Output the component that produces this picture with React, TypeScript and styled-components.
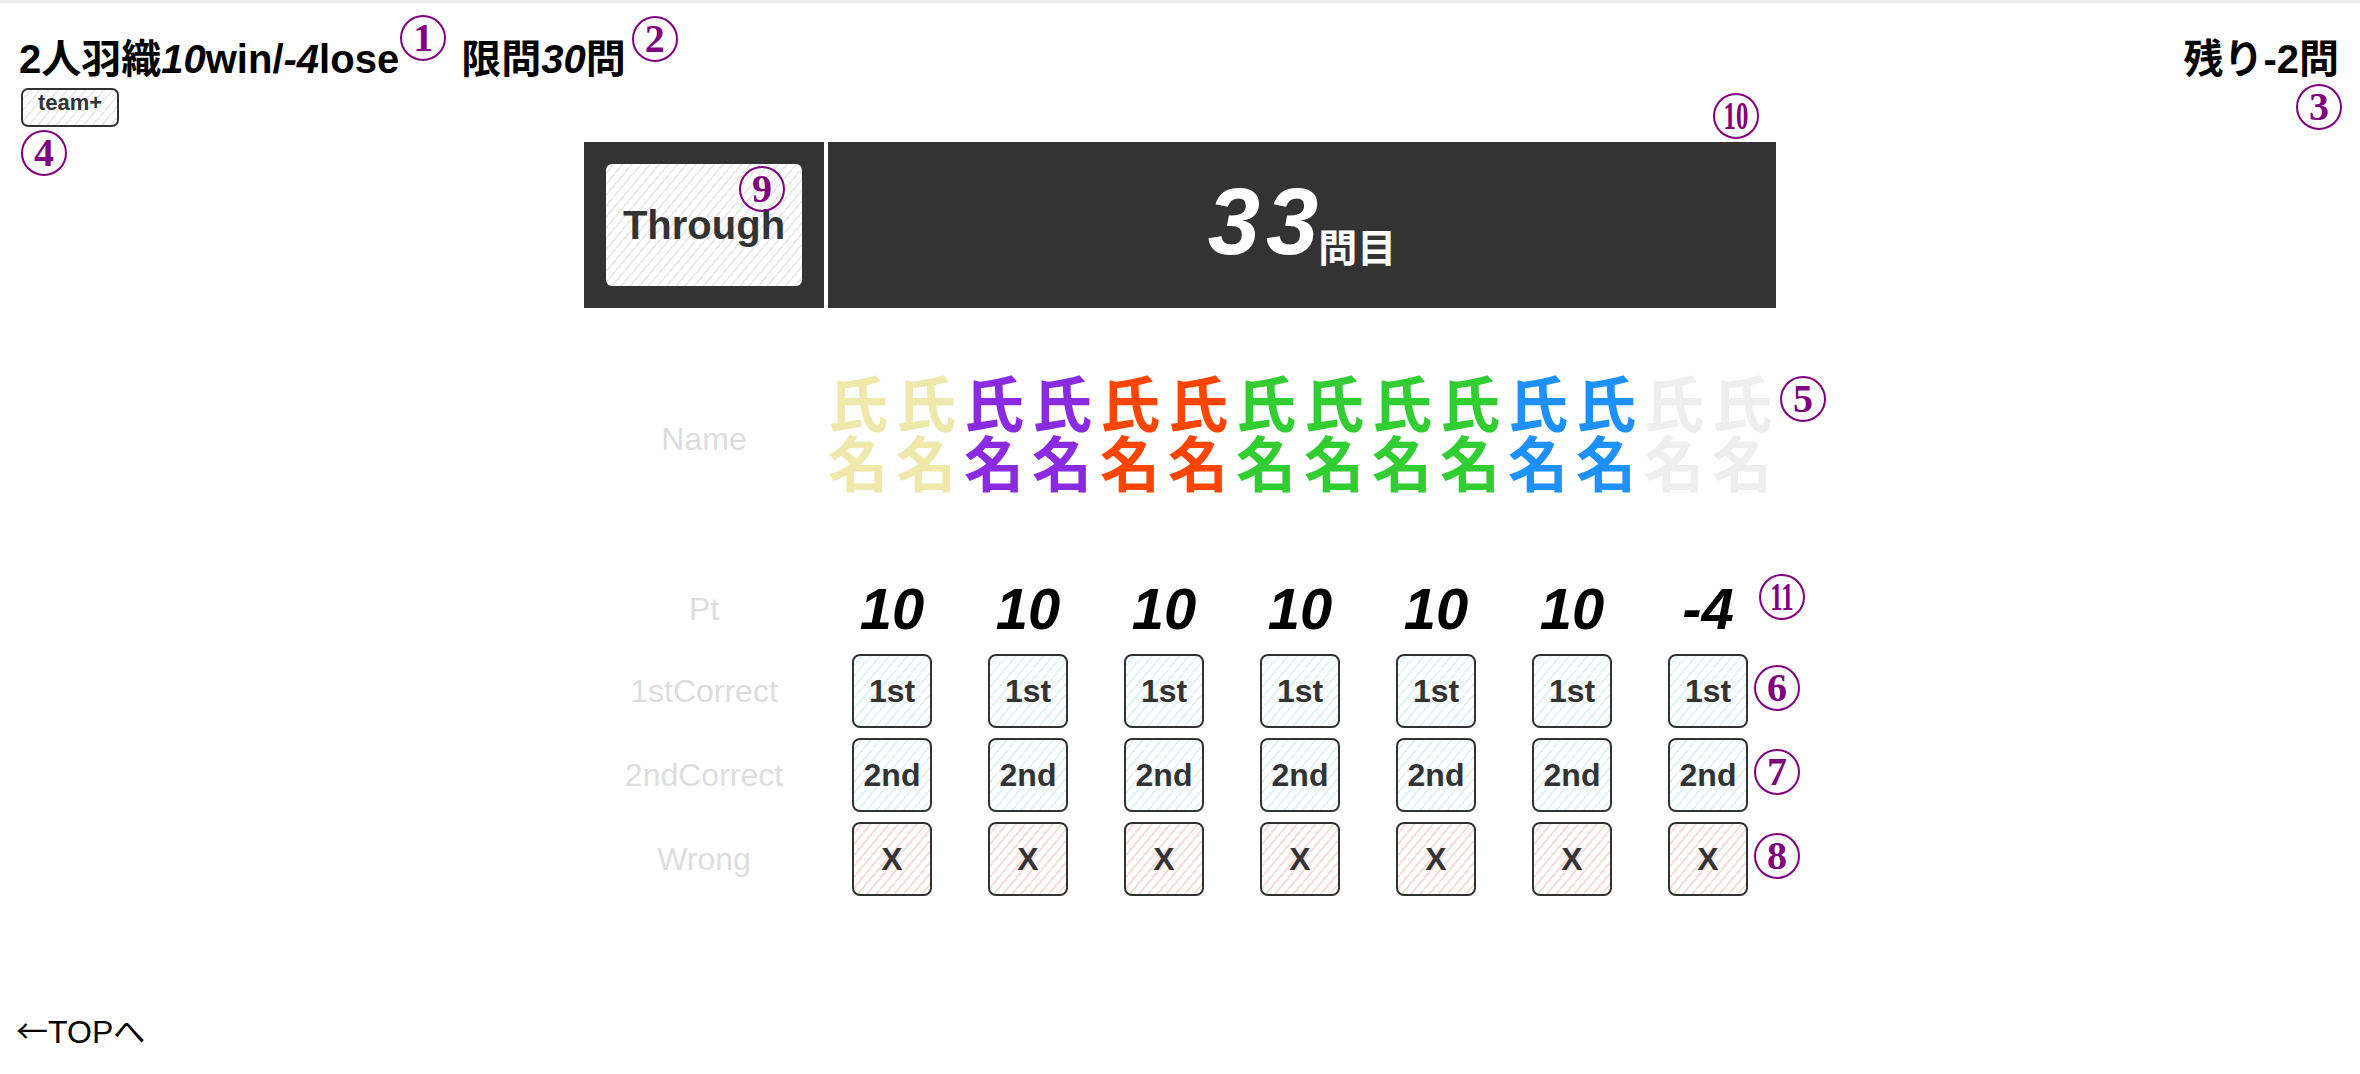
import React from "react";
import styled, { createGlobalStyle, css } from "styled-components";

const GlobalStyle = createGlobalStyle`
  * { box-sizing: border-box; }
  html, body { margin: 0; padding: 0; background: #ffffff; }
  body {
    border-top: 3px solid #efefef;
    font-family: "Liberation Sans", Arial, "Noto Sans CJK JP", sans-serif;
    color: #000;
  }
`;

const stripes = (c: string) =>
  `repeating-linear-gradient(130deg, #ffffff 0px, #ffffff 5px, ${c} 5px, ${c} 7px)`;

const Page = styled.div`
  position: relative;
  width: 100%;
`;

const TopBar = styled.header`
  display: flex;
  justify-content: space-between;
  align-items: baseline;
  padding: 33px 21px 0 19px;
  font-size: 40px;
  font-weight: bold;
  line-height: 46px;
`;

const Title = styled.h1`
  margin: 0;
  font-size: inherit;
  font-weight: inherit;
  line-height: inherit;
`;

const Anchor = styled.span<{ $gap?: number }>`
  position: relative;
  margin-left: ${(p) => p.$gap ?? 0}px;
`;

const Num = styled.span`
  font-style: italic;
`;

const Remain = styled.div`
  position: relative;
`;

const TeamButton = styled.button`
  position: relative;
  display: flex;
  align-items: center;
  justify-content: center;
  width: 98px;
  height: 39px;
  margin: 6px 0 0 21px;
  padding: 0 0 9px 0;
  border: 2px solid #333;
  border-radius: 7px;
  background: ${stripes("#ececec")};
  color: #333;
  font-family: "Liberation Sans", Arial, sans-serif;
  font-weight: bold;
  font-size: 22px;
  line-height: 1;
  cursor: pointer;
`;

const Main = styled.main`
  width: 1192px;
  margin: 15px auto 0;
`;

const HeaderBar = styled.div`
  position: relative;
  display: flex;
  gap: 4px;
  height: 166px;
`;

const ThroughCell = styled.div`
  display: flex;
  width: 240px;
  padding: 22px;
  background: #333;
`;

const ThroughButton = styled.button`
  position: relative;
  flex: 1;
  padding: 0;
  border: none;
  border-radius: 6px;
  background: ${stripes("#ebebeb")};
  color: #333;
  font-family: "Liberation Sans", Arial, sans-serif;
  font-weight: bold;
  font-size: 40px;
  cursor: pointer;
`;

const QuestionCell = styled.div`
  flex: 1;
  display: flex;
  align-items: center;
  justify-content: center;
  background: #333;
  color: #fff;
`;

const QuestionText = styled.div`
  font-weight: bold;
  line-height: 1;
  padding-bottom: 6px;
`;

const QNum = styled.span`
  font-size: 94px;
  font-style: italic;
  letter-spacing: 6px;
`;

const QUnit = styled.span`
  margin-left: -6px;
  font-size: 39px;
  vertical-align: -8px;
`;

const Row = styled.div<{ $h: number; $mt: number }>`
  display: grid;
  grid-template-columns: 240px repeat(7, 136px);
  align-items: center;
  height: ${(p) => p.$h}px;
  margin-top: ${(p) => p.$mt}px;
`;

const Label = styled.div`
  text-align: center;
  color: #dddddd;
  font-size: 32px;
  line-height: 37px;
`;

const Cell = styled.div<{ $top?: boolean }>`
  position: relative;
  display: flex;
  justify-content: center;
  align-self: ${(p) => (p.$top ? "start" : "center")};
`;

const NameBox = styled.div<{ $color: string }>`
  width: 68px;
  text-align: center;
  color: ${(p) => p.$color};
  font-family: "Noto Sans CJK JP", sans-serif;
  font-weight: 700;
  font-size: 60px;
  line-height: 60px;
  word-break: break-all;
`;

const PtValue = styled.div`
  font-size: 58px;
  font-weight: bold;
  font-style: italic;
  line-height: 64px;
  text-align: center;
`;

type Kind = "first" | "second" | "wrong";

const kindBg: Record<Kind, string> = {
  first: stripes("#e3f2f6"),
  second: stripes("#e3f2f6"),
  wrong: stripes("#f7dcd7"),
};

const ActionButton = styled.button<{ $kind: Kind }>`
  position: relative;
  width: 80px;
  height: 74px;
  padding: 0;
  border: 2px solid #333;
  border-radius: 8px;
  background: ${(p) => kindBg[p.$kind]};
  color: #333;
  font-family: "Liberation Sans", Arial, sans-serif;
  font-weight: bold;
  font-size: 32px;
  cursor: pointer;
`;

const Footer = styled.footer`
  margin-top: 115px;
  padding: 0 0 24px 16px;
  font-size: 32px;
  line-height: 37px;
`;

const TopLink = styled.a`
  color: #000;
  text-decoration: none;
`;

const Arrow = styled.span`
  font-family: "Noto Sans CJK JP", sans-serif;
`;

const MarkRing = styled.span<{ $top?: string; $left?: string; $right?: string }>`
  position: absolute;
  z-index: 2;
  ${(p) => p.$top !== undefined && css`top: ${p.$top};`}
  ${(p) => p.$left !== undefined && css`left: ${p.$left};`}
  ${(p) => p.$right !== undefined && css`right: ${p.$right};`}
  display: flex;
  align-items: center;
  justify-content: center;
  width: 46px;
  height: 46px;
  border: 2px solid #800080;
  border-radius: 50%;
  color: #800080;
  font-family: "Liberation Serif", "DejaVu Serif", serif;
  font-weight: bold;
  font-style: normal;
  font-size: 40px;
  line-height: 1;
  letter-spacing: 0;
  pointer-events: none;
`;

const MarkDigits = styled.span<{ $narrow?: boolean }>`
  display: inline-block;
  transform: ${(p) => (p.$narrow ? "scaleX(0.62)" : "none")};
`;

type MarkProps = { n: string; top?: string; left?: string; right?: string };
const Mark = ({ n, top, left, right }: MarkProps) => (
  <MarkRing $top={top} $left={left} $right={right}>
    <MarkDigits $narrow={n.length > 1}>{n}</MarkDigits>
  </MarkRing>
);

const teams = [
  { color: "#eee8aa", pt: "10" },
  { color: "#8a2be2", pt: "10" },
  { color: "#ff4500", pt: "10" },
  { color: "#32cd32", pt: "10" },
  { color: "#32cd32", pt: "10" },
  { color: "#1e90ff", pt: "10" },
  { color: "#eeeeee", pt: "-4" },
];

const actions: { kind: Kind; label: string; text: string; mark: string }[] = [
  { kind: "first", label: "1stCorrect", text: "1st", mark: "6" },
  { kind: "second", label: "2ndCorrect", text: "2nd", mark: "7" },
  { kind: "wrong", label: "Wrong", text: "X", mark: "8" },
];

export default function App() {
  const last = teams.length - 1;
  return (
    <Page>
      <GlobalStyle />
      <TopBar>
        <Title>
          <Anchor>
            2人羽織<Num>10</Num>win/<Num>-4</Num>lose
            <Mark n="1" top="-22px" left="calc(100% + 1px)" />
          </Anchor>
          <Anchor $gap={62}>
            限問<Num>30</Num>問
            <Mark n="2" top="-21px" left="calc(100% + 6px)" />
          </Anchor>
        </Title>
        <Remain>
          残り-2問
          <Mark n="3" top="48px" right="-3px" />
        </Remain>
      </TopBar>
      <TeamButton>
        team+
        <Mark n="4" top="calc(100% + 5px)" left="-2px" />
      </TeamButton>

      <Main>
        <HeaderBar>
          <ThroughCell>
            <ThroughButton>
              Through
              <Mark n="9" top="2px" left="133px" />
            </ThroughButton>
          </ThroughCell>
          <QuestionCell>
            <QuestionText>
              <QNum>33</QNum>
              <QUnit>問目</QUnit>
            </QuestionText>
          </QuestionCell>
          <Mark n="10" top="-49px" right="17px" />
        </HeaderBar>

        <Row $h={136} $mt={63}>
          <Label>Name</Label>
          {teams.map((t, i) => (
            <Cell key={i} $top>
              <NameBox $color={t.color}>氏名</NameBox>
              <NameBox $color={t.color}>氏名</NameBox>
              {i === last && <Mark n="5" top="5px" left="calc(100% + 4px)" />}
            </Cell>
          ))}
        </Row>

        <Row $h={64} $mt={70}>
          <Label>Pt</Label>
          {teams.map((t, i) => (
            <Cell key={i}>
              <PtValue>{t.pt}</PtValue>
              {i === last && <Mark n="11" top="-3px" left="calc(100% - 17px)" />}
            </Cell>
          ))}
        </Row>

        {actions.map((a, r) => (
          <Row key={a.kind} $h={74} $mt={r === 0 ? 13 : 10}>
            <Label>{a.label}</Label>
            {teams.map((_, i) => (
              <Cell key={i}>
                <ActionButton $kind={a.kind}>
                  {a.text}
                  {i === last && <Mark n={a.mark} top="9px" left="calc(100% + 8px)" />}
                </ActionButton>
              </Cell>
            ))}
          </Row>
        ))}
      </Main>

      <Footer>
        <TopLink href="#">
          <Arrow>←</Arrow>TOPへ
        </TopLink>
      </Footer>
    </Page>
  );
}
